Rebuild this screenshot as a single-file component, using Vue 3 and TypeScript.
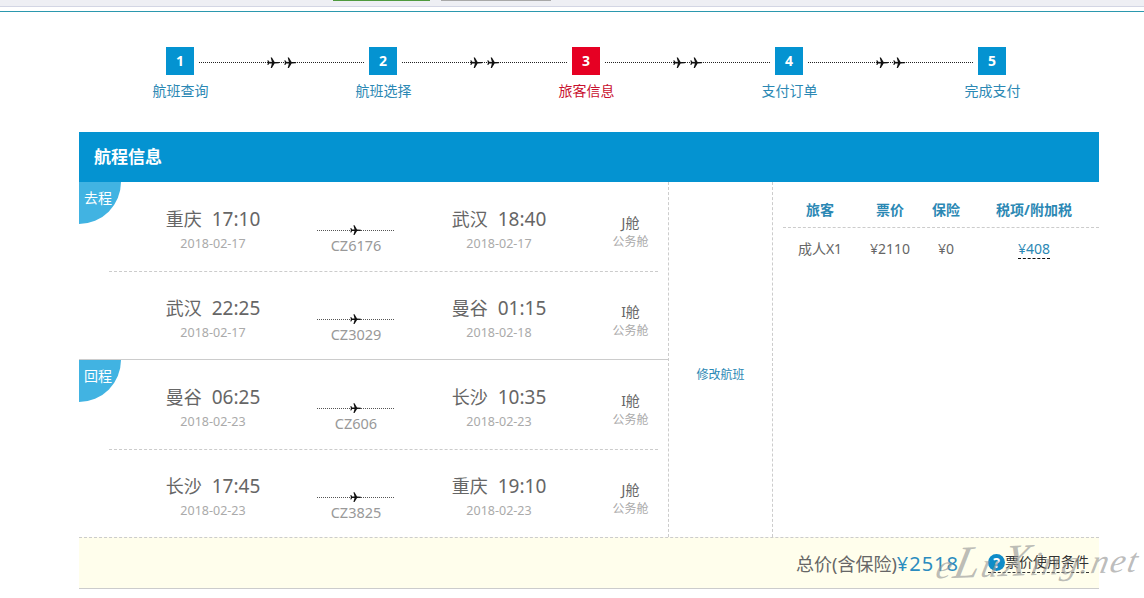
<script setup lang="ts">
const steps = [
  { n: 1, label: '航班查询' },
  { n: 2, label: '航班选择' },
  { n: 3, label: '旅客信息', active: true },
  { n: 4, label: '支付订单' },
  { n: 5, label: '完成支付' },
]
const groups = [
  {
    tag: '去程',
    rows: [
      { from: '重庆', dep: '17:10', depDate: '2018-02-17', no: 'CZ6176', to: '武汉', arr: '18:40', arrDate: '2018-02-17', cabin: 'J舱' },
      { from: '武汉', dep: '22:25', depDate: '2018-02-17', no: 'CZ3029', to: '曼谷', arr: '01:15', arrDate: '2018-02-18', cabin: 'I舱' },
    ],
  },
  {
    tag: '回程',
    rows: [
      { from: '曼谷', dep: '06:25', depDate: '2018-02-23', no: 'CZ606', to: '长沙', arr: '10:35', arrDate: '2018-02-23', cabin: 'I舱' },
      { from: '长沙', dep: '17:45', depDate: '2018-02-23', no: 'CZ3825', to: '重庆', arr: '19:10', arrDate: '2018-02-23', cabin: 'J舱' },
    ],
  },
]
const planePath = 'M11.6 5.1 7.6 4.9 4.900 .4H3.700L4.900 4.900 2.200 4.800 1.300 3.300H.4L.9 5.700 .4 8.100H1.300L2.200 6.600 4.900 6.500 3.700 11H4.900L7.600 6.500 11.600 6.300C12.500 6.100 12.500 5.300 11.600 5.100Z'
</script>

<template>
  <div class="page">
    <div class="browser">
      <span class="btn-green"></span>
      <span class="btn-gray"></span>
    </div>
    <div class="rule"></div>

    <div class="step-track">
      <template v-for="(s, i) in steps" :key="s.n">
        <div class="box" :class="{ red: s.active }">{{ s.n }}</div>
        <div v-if="i < steps.length - 1" class="link">
          <svg class="jet" width="13" height="12" viewBox="0 0 13 12"><path :d="planePath" /></svg>
          <svg class="jet" width="13" height="12" viewBox="0 0 13 12"><path :d="planePath" /></svg>
        </div>
      </template>
    </div>
    <div class="step-labels">
      <div v-for="s in steps" :key="s.n" class="step-label" :class="{ red: s.active }">{{ s.label }}</div>
    </div>

    <section class="panel">
      <h2 class="panel-head">航程信息</h2>
      <div class="panel-body">
        <div class="routes">
          <div v-for="g in groups" :key="g.tag" class="group">
            <span class="tag">{{ g.tag }}</span>
            <div v-for="r in g.rows" :key="r.no" class="row">
              <div class="point">
                <div class="place"><span class="city">{{ r.from }}</span><span>{{ r.dep }}</span></div>
                <div class="date">{{ r.depDate }}</div>
              </div>
              <div class="flight">
                <div class="track">
                  <svg width="12" height="11" viewBox="0 0 13 12"><path :d="planePath" /></svg>
                </div>
                <div class="no">{{ r.no }}</div>
              </div>
              <div class="point">
                <div class="place"><span class="city">{{ r.to }}</span><span>{{ r.arr }}</span></div>
                <div class="date">{{ r.arrDate }}</div>
              </div>
              <div class="cabin">
                <div class="cabin-code">{{ r.cabin }}</div>
                <div class="cabin-name">公务舱</div>
              </div>
            </div>
          </div>
        </div>
        <div class="change"><span>修改航班</span></div>
        <div class="prices">
          <div class="grid grid-head">
            <span>旅客</span><span>票价</span><span>保险</span><span>税项/附加税</span>
          </div>
          <div class="grid grid-data">
            <span>成人X1</span><span>¥2110</span><span>¥0</span><span><a class="tax">¥408</a></span>
          </div>
        </div>
      </div>
      <div class="total">
        <span class="total-label">总价(含保险)</span>
        <span class="total-value">¥2518</span>
        <span class="terms-wrap">
          <span class="help">?</span>
          <span class="terms">票价使用条件</span>
        </span>
      </div>
    </section>
    <div class="watermark">e<span class="cap">L</span>u<span class="cap">X</span>ing.net</div>
  </div>
</template>

<style>
html, body { margin: 0; background: #fff; overflow: hidden; }
</style>

<style scoped>
.page {
  position: relative;
  width: 1144px;
  height: 598px;
  overflow: hidden;
  background: #fff;
  font-family: "Noto Sans", "Noto Sans CJK SC", sans-serif;
  color: #666;
}
.browser {
  height: 6px;
  background: #eeeff4;
  border-bottom: 1px solid #d3d6e4;
  display: flex;
  align-items: flex-start;
  padding-left: 333px;
}
.btn-green { width: 97px; height: 1px; background: #4f9a3e; }
.btn-gray { width: 110px; height: 1px; margin-left: 11px; background: #a8a8a8; }
.rule { height: 1px; margin-top: 4px; background: #2b98ae; }
.step-track {
  display: flex;
  align-items: center;
  margin: 35px 0 0 166px;
}
.box {
  width: 28px;
  height: 28px;
  flex: none;
  background: #0493d1;
  color: #fff;
  font: 700 14px/28px "Noto Sans", sans-serif;
  text-align: center;
}
.box.red { background: #e60023; }
.link {
  width: 165px;
  height: 12px;
  margin: 3px 5px 0;
  display: flex;
  align-items: center;
  justify-content: center;
  gap: 4px;
  background: linear-gradient(90deg, #222 50%, transparent 50%) 0 5px / 2px 1px repeat-x;
}
.jet { fill: #111; flex: none; }
.step-labels {
  display: flex;
  margin: 6px 0 0 79px;
}
.step-label {
  width: 203px;
  text-align: center;
  font-size: 14px;
  line-height: 20px;
  color: #2b88b4;
}
.step-label.red { color: #c8102e; }
.panel {
  margin: 31px 45px 0 79px;
}
.panel-head {
  margin: 0;
  height: 50px;
  padding-left: 15px;
  background: #0493d1;
  color: #fff;
  font-size: 17px;
  font-weight: 700;
  line-height: 50px;
}
.panel-body {
  display: flex;
  height: 355px;
}
.routes {
  width: 589px;
  flex: none;
  border-right: 1px dashed #ccc;
}
.group { position: relative; }
.group + .group { border-top: 1px solid #ccc; margin-top: -1px; }
.tag {
  position: absolute;
  left: 0;
  top: 0;
  width: 42px;
  height: 42px;
  padding: 7px 0 0 5px;
  box-sizing: border-box;
  background: #41b3e2;
  border-bottom-right-radius: 42px;
  color: #fff;
  font-size: 14px;
  line-height: 18px;
}
.row {
  display: grid;
  grid-template-columns: 208px 78px 208px 55px;
  height: 88px;
  box-sizing: border-box;
  margin: 0 10px 0 30px;
  padding-top: 23px;
}
.row:first-of-type {
  height: 90px;
  padding-top: 24px;
  border-bottom: 1px dashed #ccc;
}
.point { text-align: center; }
.place {
  display: flex;
  justify-content: center;
  align-items: baseline;
  gap: 10px;
  font-size: 19px;
  line-height: 26px;
  color: #666;
}
.city { font-size: 18px; }
.date {
  margin-top: 3px;
  font-size: 12.5px;
  line-height: 17px;
  color: #aaa;
}
.flight { padding-top: 17px; text-align: center; }
.track {
  height: 11px;
  display: flex;
  justify-content: center;
  background: linear-gradient(90deg, #555 50%, transparent 50%) 0 7px / 2px 1px repeat-x;
}
.track svg { fill: #111; margin-top: 2px; }
.no { margin-top: 2px; font-size: 14.5px; line-height: 18px; color: #999; }
.cabin { text-align: center; padding-top: 8px; }
.cabin-code { font-size: 14px; line-height: 18px; color: #666; }
.cabin-name { margin-top: 1px; font-size: 12px; line-height: 18px; color: #aaa; }
.change {
  width: 104px;
  flex: none;
  border-right: 1px dashed #ccc;
  display: flex;
  align-items: center;
  justify-content: center;
  padding-top: 28px;
  box-sizing: border-box;
  font-size: 12px;
  color: #2b88b4;
}
.prices { flex: 1; padding: 17px 0 0 10px; }
.grid {
  display: grid;
  grid-template-columns: 74px 66px 46px 130px;
  text-align: center;
}
.grid-head {
  height: 28px;
  line-height: 22px;
  border-bottom: 1px dashed #ccc;
  font-size: 14px;
  font-weight: 700;
  color: #2b88b4;
}
.grid-data { padding-top: 11px; font-size: 14px; line-height: 20px; color: #666; }
.tax {
  display: inline-block;
  line-height: 19px;
  color: #2b88b4;
  border-bottom: 1px dashed #111;
}
.total {
  display: flex;
  align-items: center;
  justify-content: flex-end;
  height: 52px;
  box-sizing: border-box;
  padding-right: 10px;
  background: #fffeec;
  border-top: 1px dashed #ccc;
  border-bottom: 1px solid #ccc;
}
.total-label { font-size: 18px; color: #666; }
.total-value { font-size: 20px; color: #2b8cbf; letter-spacing: 1px; }
.terms-wrap {
  display: flex;
  align-items: center;
  margin-left: 29px;
  padding-bottom: 1px;
  border-bottom: 1px dashed #333;
}
.help {
  width: 17px;
  height: 17px;
  border-radius: 50%;
  background: #0f8cc8;
  color: #fff;
  font: 700 14px/17px "Noto Sans", sans-serif;
  text-align: center;
}
.terms {
  font-size: 14px;
  line-height: 18px;
  color: #333;
}
.watermark {
  position: absolute;
  left: 938px;
  top: 535px;
  font: italic 34px/50px "Liberation Serif", serif;
  color: rgba(150, 150, 150, .65);
  letter-spacing: 2px;
  white-space: nowrap;
  pointer-events: none;
  transform: skewX(-14deg) rotate(-2deg);
}
.cap { font-size: 46px; }
</style>
